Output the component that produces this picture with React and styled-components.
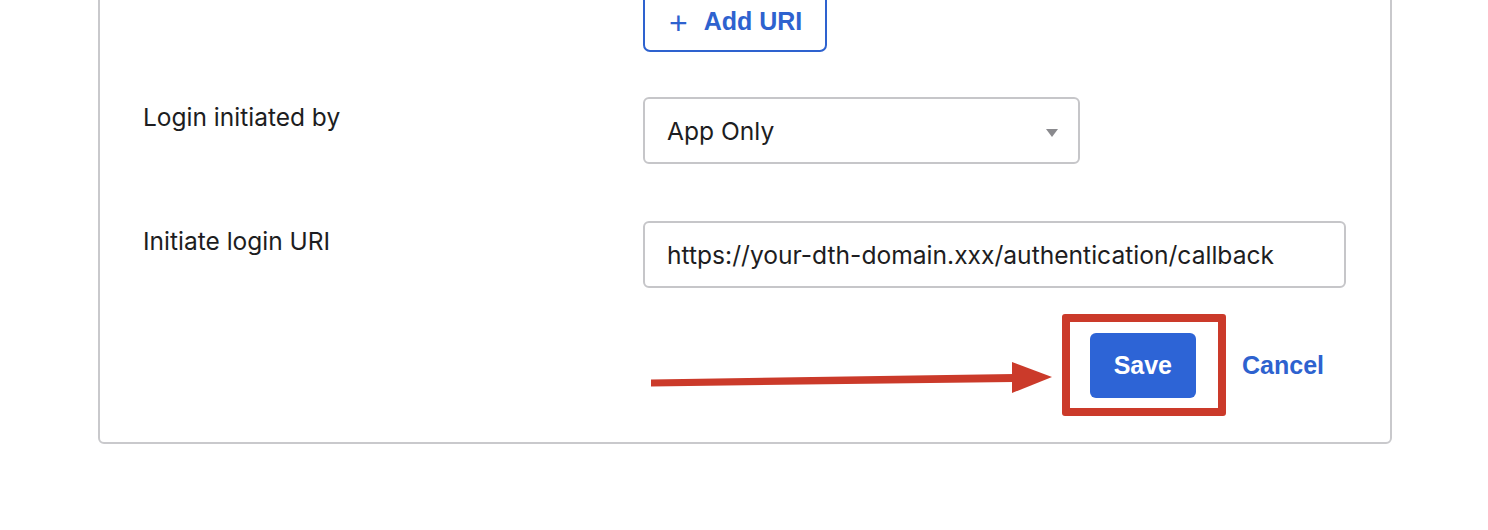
import React from 'react'
import styled, { createGlobalStyle } from 'styled-components'

const GlobalStyle = createGlobalStyle`
  body {
    margin: 0;
    background: #fff;
    font-family: Inter, "Noto Sans", sans-serif;
    color: #1d1d21;
  }
`

const Page = styled.div`
  width: 1488px;
  height: 530px;
  overflow: hidden;
`

const Panel = styled.div`
  margin: -30px 0 0 98px;
  width: 1294px;
  box-sizing: border-box;
  border: 2px solid #c9c9cc;
  border-radius: 6px;
  padding: 18px 44px 44px 43px;
`

const Row = styled.div`
  display: grid;
  grid-template-columns: 500px 1fr;
  margin-top: ${p => p.gap || 0}px;
`

const Label = styled.div`
  font-size: 24.5px;
  line-height: 28px;
  padding-top: 6px;
`

const OutlineButton = styled.button`
  justify-self: start;
  height: 62px;
  box-sizing: border-box;
  display: flex;
  align-items: center;
  gap: 16px;
  padding: 0 23px 0 24px;
  background: #fff;
  border: 2px solid #2e62cf;
  border-radius: 7px;
  color: #2e62cf;
  font-family: "Liberation Sans", Arial, sans-serif;
  font-weight: 700;
  font-size: 25px;
`

const Plus = styled.span`
  font-weight: 400;
  font-size: 32px;
  line-height: 1;
  margin-top: 4px;
`

const Field = styled.div`
  box-sizing: border-box;
  height: 67px;
  width: ${p => p.width ? p.width + 'px' : '100%'};
  border: 2px solid #c6c6c9;
  border-radius: 6px;
  display: flex;
  align-items: center;
  justify-content: space-between;
  padding: 0 20px 0 22px;
  font-size: 24.6px;
  color: #1d1d21;
`

const Caret = styled.span`
  width: 0;
  height: 0;
  margin-top: 5px;
  border-left: 6px solid transparent;
  border-right: 6px solid transparent;
  border-top: 8px solid #8a8a8e;
`

const Actions = styled.div`
  display: flex;
  justify-content: flex-end;
  align-items: center;
  gap: 46px;
  padding-right: 22px;
  margin-top: 45px;
`

const Highlight = styled.span`
  position: relative;
  display: inline-flex;
`

const SaveButton = styled.button`
  height: 65px;
  padding: 0 24px;
  border: none;
  border-radius: 6px;
  background: #2d64d6;
  color: #fff;
  font-family: "Liberation Sans", Arial, sans-serif;
  font-weight: 700;
  font-size: 25px;
`

const RedBox = styled.span`
  position: absolute;
  left: -28px;
  top: -19px;
  width: 164px;
  height: 102px;
  box-sizing: border-box;
  border: 8px solid #cb3a2a;
  border-radius: 3px;
  pointer-events: none;
`

const Arrow = styled.svg`
  position: absolute;
  left: -439px;
  top: 25px;
  overflow: visible;
`

const LinkButton = styled.a`
  color: #2e62cf;
  font-family: "Liberation Sans", Arial, sans-serif;
  font-weight: 700;
  font-size: 25px;
  text-decoration: none;
`

export default function App() {
  return (
    <Page>
      <GlobalStyle />
      <Panel>
        <Row>
          <div />
          <OutlineButton><Plus>+</Plus>Add URI</OutlineButton>
        </Row>
        <Row gap={45}>
          <Label>Login initiated by</Label>
          <Field width={437}>
            <span>App Only</span>
            <Caret />
          </Field>
        </Row>
        <Row gap={57}>
          <Label>Initiate login URI</Label>
          <Field>https://your-dth-domain.xxx/authentication/callback</Field>
        </Row>
        <Actions>
          <Highlight>
            <SaveButton>Save</SaveButton>
            <RedBox />
            <Arrow width="402" height="40" viewBox="0 0 402 40">
              <polygon points="0,21.5 363,16 363,24 0,28.5" fill="#cb3a2a" />
              <polygon points="361,4 401,19 361,35" fill="#cb3a2a" />
            </Arrow>
          </Highlight>
          <LinkButton href="#">Cancel</LinkButton>
        </Actions>
      </Panel>
    </Page>
  )
}
